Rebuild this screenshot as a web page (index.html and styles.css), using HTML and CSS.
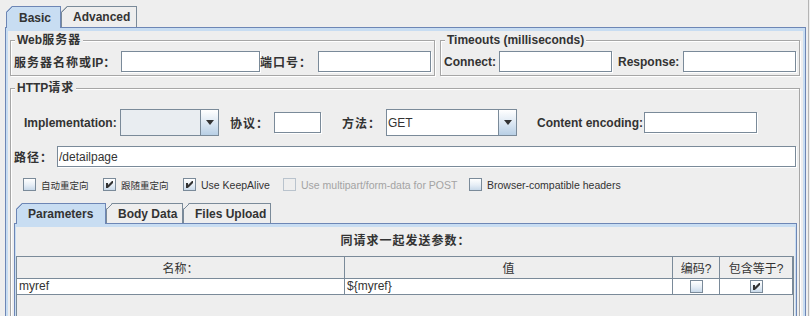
FILE: index.html
```html
<!DOCTYPE html>
<html lang="zh">
<head>
<meta charset="utf-8">
<title>HTTP请求</title>
<link rel="stylesheet" href="styles.css">
</head>
<body>
<div class="window">
  <div class="tabstrip top-tabs">
    <div class="tab selected tab-basic">Basic</div>
    <div class="tab tab-advanced">Advanced</div>
  </div>
  <div class="outer-panel">
    <div class="top-row">
      <fieldset class="group web-group">
        <legend>Web<span class="zh">服务器</span></legend>
        <div class="fields">
          <label class="lbl lbl-server"><span class="zh">服务器名称或</span>IP<span class="zh">：</span></label>
          <input class="field w-server" type="text">
          <label class="lbl lbl-port zh">端口号：</label>
          <input class="field w-port" type="text">
        </div>
      </fieldset>
      <fieldset class="group timeout-group">
        <legend>Timeouts (milliseconds)</legend>
        <div class="fields">
          <label class="lbl lbl-connect">Connect:</label>
          <input class="field w-timeout" type="text">
          <label class="lbl lbl-response">Response:</label>
          <input class="field w-timeout" type="text">
        </div>
      </fieldset>
    </div>
    <fieldset class="group http-group">
      <legend>HTTP<span class="zh">请求</span></legend>
      <div class="req-row">
        <label class="lbl lbl-impl">Implementation:</label>
        <div class="combo combo-impl"><span class="combo-value"></span><span class="combo-btn"><span class="caret"></span></span></div>
        <label class="lbl lbl-proto zh">协议：</label>
        <input class="field w-proto" type="text">
        <label class="lbl lbl-method zh">方法：</label>
        <div class="combo combo-method"><span class="combo-value">GET</span><span class="combo-btn"><span class="caret"></span></span></div>
        <label class="lbl lbl-enc">Content encoding:</label>
        <input class="field w-enc" type="text">
      </div>
      <div class="path-row">
        <label class="lbl lbl-path zh">路径：</label>
        <input class="field w-path" type="text" value="/detailpage">
      </div>
      <div class="options">
        <label class="opt opt-1"><span class="cb"></span><span class="opt-zh">自动重定向</span></label>
        <label class="opt opt-2"><span class="cb"><svg class="tick" viewBox="0 0 11 11" width="11" height="11"><path d="M2 4h2v5h-2z M4 6 L8 2 L9 2 L9 4 L4.5 8.5 L4 8.5z"/></svg></span><span class="opt-zh">跟随重定向</span></label>
        <label class="opt opt-3"><span class="cb"><svg class="tick" viewBox="0 0 11 11" width="11" height="11"><path d="M2 4h2v5h-2z M4 6 L8 2 L9 2 L9 4 L4.5 8.5 L4 8.5z"/></svg></span><span>Use KeepAlive</span></label>
        <label class="opt opt-4 disabled"><span class="cb"></span><span>Use multipart/form-data for POST</span></label>
        <label class="opt opt-5"><span class="cb"></span><span>Browser-compatible headers</span></label>
      </div>
      <div class="tabstrip inner-tabs">
        <div class="tab selected tab-params">Parameters</div>
        <div class="tab tab-body">Body Data</div>
        <div class="tab tab-files">Files Upload</div>
      </div>
      <div class="inner-panel">
        <div class="params-title zh">同请求一起发送参数：</div>
        <div class="table-pane">
          <div class="trow">
            <div class="th">名称：</div>
            <div class="th">值</div>
            <div class="th">编码?</div>
            <div class="th">包含等于?</div>
          </div>
          <div class="trow">
            <div class="td">myref</div>
            <div class="td">${myref}</div>
            <div class="td td-check"><span class="cb"></span></div>
            <div class="td td-check"><span class="cb"><svg class="tick" viewBox="0 0 11 11" width="11" height="11"><path d="M2 4h2v5h-2z M4 6 L8 2 L9 2 L9 4 L4.5 8.5 L4 8.5z"/></svg></span></div>
          </div>
        </div>
      </div>
    </fieldset>
  </div>
</div>
</body>
</html>
```

FILE: styles.css
```css
* { box-sizing: border-box; }
html, body { margin: 0; padding: 0; }
body {
  width: 810px;
  height: 316px;
  overflow: hidden;
  background: #eeeeee;
  color: #333333;
  font-family: "Liberation Sans", "Noto Sans CJK SC", sans-serif;
  font-size: 12px;
}
.window {
  width: 809px;
  height: 316px;
  border-right: 1px solid #b4b4b4;
}
.zh { letter-spacing: 1px; }

/* ---------- tabs ---------- */
.tabstrip { display: flex; align-items: flex-start; }
.top-tabs { height: 27px; padding: 6px 0 0 6px; }
.inner-tabs { height: 20px; margin-top: 11px; padding-left: 2px; }
.tab {
  position: relative;
  display: flex;
  align-items: center;
  flex: none;
  height: 21px;
  padding-left: 11px;
  font-weight: bold;
  white-space: nowrap;
  border: 1px solid #7a8a99;
  border-bottom: 0;
  background:
    linear-gradient(to bottom right, transparent 50%, #7a8a99 50%, #7a8a99 calc(50% + 1.1px), transparent calc(50% + 1.1px)) 0 0 / 6px 6px no-repeat border-box,
    #eeeeee;
  clip-path: polygon(6px 0, 100% 0, 100% 100%, 0 100%, 0 6px);
}
.tab.selected {
  z-index: 1;
  height: 22px;
  margin-bottom: -1px;
  border-color: #6d86b5;
  background:
    linear-gradient(to bottom right, transparent 50%, #6d86b5 50%, #6d86b5 calc(50% + 1.1px), transparent calc(50% + 1.1px)) 0 0 / 6px 6px no-repeat border-box,
    #c8ddf2;
}
.inner-tabs .tab { height: 20px; }
.inner-tabs .tab.selected { height: 21px; }
.tab-basic { width: 55px; padding-left: 12px; }
.tab-advanced { width: 76px; }
.tab-params { width: 90px; }
.tab-body { width: 77px; }
.tab-files { width: 88px; }

/* ---------- outer panel ---------- */
.outer-panel {
  margin-left: 5px;
  width: 801px;
  height: 300px;
  border: 1px solid #6d86b5;
  padding: 5px 5px 0 4px;
  box-shadow: inset 0 3px 0 #c8ddf2, inset 2px 0 0 #c8ddf2, inset -2px 0 0 #c8ddf2;
}
.top-row { display: flex; gap: 5px; }
.web-group { width: 425px; flex: none; }
.timeout-group { flex: 1; }

/* ---------- titled groups ---------- */
.group {
  margin: 0;
  padding: 0 3px 3px 3px;
  min-width: 0;
  border: 1px solid #a6a6a6;
  box-shadow: inset 1px 1px 0 #ffffff, 1px 1px 0 #ffffff;
}
.group legend {
  margin-left: 1px;
  padding: 0 2px;
  height: 14px;
  line-height: 14px;
  font-weight: bold;
  background: #eeeeee;
}
.http-group { margin-top: 5px; padding: 0 2px 0 3px; }

.fields { display: flex; align-items: center; height: 21px; margin-top: 4px; }

.lbl { flex: none; font-weight: bold; white-space: nowrap; }
.lbl-server { width: 107px; }
.lbl-port { width: 58px; }
.lbl-connect { width: 55px; }
.lbl-response { width: 65px; margin-left: 6px; }
.lbl-impl { width: 96px; }
.lbl-proto { width: 44px; margin-left: 11px; }
.lbl-method { width: 44px; margin-left: 21px; }
.lbl-enc { width: 107px; margin-left: 20px; }
.lbl-path { width: 43px; }

.field {
  flex: none;
  height: 21px;
  margin: 0;
  padding: 0 1px;
  border: 1px solid #7a8a99;
  box-shadow: 1px 1px 0 #ffffff;
  background: #ffffff;
  color: #333333;
  font: 12px "Liberation Sans", "Noto Sans CJK SC", sans-serif;
  outline: none;
}
.w-server { width: 139px; }
.w-port { width: 113px; }
.w-timeout { width: 113px; }
.w-proto { width: 47px; }
.w-enc { width: 113px; }
.w-path { width: 739px; }

/* ---------- request rows ---------- */
.req-row { display: flex; align-items: center; height: 27px; margin-top: 14px; padding-left: 10px; }
.path-row { display: flex; align-items: center; height: 21px; margin-top: 10px; }

.combo { display: flex; flex: none; height: 27px; border: 1px solid #7a8a99; }
.combo-impl { width: 99px; }
.combo-method { width: 131px; }
.combo-value {
  flex: 1;
  display: flex;
  align-items: center;
  padding-left: 1px;
  background: #ffffff;
  font-size: 12px;
}
.combo-impl .combo-value { background: #e9edf1; }
.combo-btn {
  width: 18px;
  flex: none;
  display: flex;
  align-items: center;
  justify-content: center;
  border-left: 1px solid #7a8a99;
  background: linear-gradient(#ffffff, #dde8f3 50%, #b8cfe5);
}
.caret {
  width: 0;
  height: 0;
  border-left: 4.5px solid transparent;
  border-right: 4.5px solid transparent;
  border-top: 5px solid #333333;
}

/* ---------- options ---------- */
.options {
  display: flex;
  align-items: center;
  height: 15px;
  margin-top: 10px;
  padding-left: 9px;
  font-size: 10.5px;
}
.opt { display: flex; align-items: center; gap: 5px; flex: none; white-space: nowrap; }
.opt-1, .opt-2 { width: 80px; }
.opt-3 { width: 100px; }
.opt-4 { width: 186px; }
.opt-zh { font-size: 9.5px; }
.opt.disabled { color: #a3a3a3; }
.opt.disabled .cb { border-color: #b9c3cd; background: #eeeeee; }

.cb {
  width: 13px;
  height: 13px;
  flex: none;
  display: flex;
  border: 1px solid #7a8a99;
  background: linear-gradient(#ffffff, #e6eef6 55%, #c8d9ea);
}
.tick { display: block; fill: #333333; }

/* ---------- parameters panel ---------- */
.inner-panel {
  height: 120px;
  border: 1px solid #6d86b5;
  padding: 3px 1px 0 1px;
  box-shadow: inset 0 3px 0 #c8ddf2, inset 1px 0 0 #c8ddf2, inset -1px 0 0 #c8ddf2;
}
.params-title {
  height: 29px;
  line-height: 29px;
  text-align: center;
  font-weight: bold;
}
.table-pane {
  width: 778px;
  height: 100px;
  border: 1px solid #7a8a99;
}
.trow { display: grid; grid-template-columns: 328px 328px 47px 73px; }
.th {
  height: 22px;
  display: flex;
  align-items: center;
  justify-content: center;
  border-right: 1px solid #7a8a99;
  border-bottom: 1px solid #7a8a99;
}
.td {
  height: 16px;
  display: flex;
  align-items: center;
  padding-left: 2px;
  line-height: 15px;
  background: #ffffff;
  border-right: 1px solid #7a8a99;
  border-bottom: 1px solid #7a8a99;
}
.td-check { justify-content: center; padding-left: 0; }
```
